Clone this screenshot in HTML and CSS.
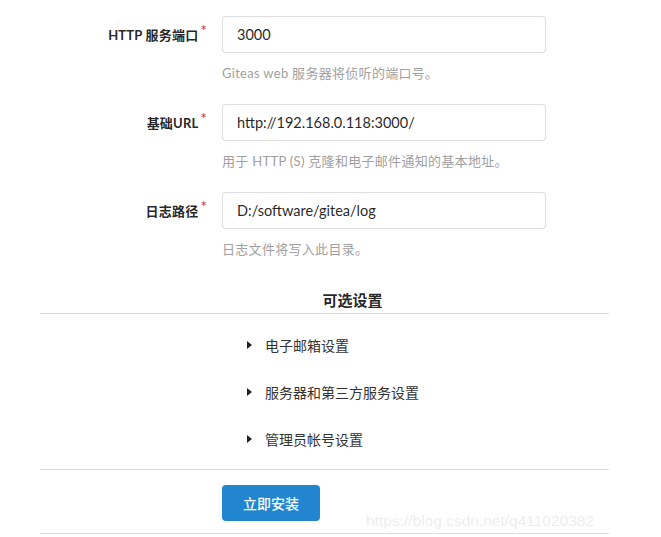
FILE: index.html
```html
<!DOCTYPE html>
<html lang="zh-CN">
<head>
  <meta charset="UTF-8" />
  <meta name="viewport" content="width=device-width, initial-scale=1.0"/>
  <title>安装</title>
  <link rel="stylesheet" href="styles.css">
</head>
<body>
  <div class="install-form">

    <!-- 基本设置 -->
    <div class="field">
      <label class="field-label required">HTTP 服务端口</label>
      <div class="field-body">
        <input type="text" value="3000" />
        <span class="help">Giteas web 服务器将侦听的端口号。</span>
      </div>
    </div>

    <div class="field">
      <label class="field-label required">基础URL</label>
      <div class="field-body">
        <input type="text" value="http://192.168.0.118:3000/" />
        <span class="help">用于 HTTP (S) 克隆和电子邮件通知的基本地址。</span>
      </div>
    </div>

    <div class="field">
      <label class="field-label required">日志路径</label>
      <div class="field-body">
        <input type="text" value="D:/software/gitea/log" />
        <span class="help">日志文件将写入此目录。</span>
      </div>
    </div>

    <!-- 可选设置 -->
    <h4 class="divider-header">可选设置</h4>
    <div class="optional">
      <div class="toggle"><i class="caret"></i>电子邮箱设置</div>
      <div class="toggle"><i class="caret"></i>服务器和第三方服务设置</div>
      <div class="toggle"><i class="caret"></i>管理员帐号设置</div>
    </div>

    <div class="actions">
      <button class="btn-primary">立即安装</button>
    </div>
  </div>

  <div class="watermark">https://blog.csdn.net/q411020382</div>
</body>
</html>
```

FILE: styles.css
```css
body {
  margin: 0;
  background-color: #fff;
  font-family: Lato, "Noto Sans CJK SC", sans-serif;
  color: rgba(0, 0, 0, 0.87);
}
.install-form {
  width: 569px;
  margin-left: 40px;
  padding-top: 16px;
}

/* Fields */
.field {
  display: flex;
  align-items: flex-start;
  margin-bottom: 21px;
}
.field-label {
  width: 167px;
  margin-right: 15px;
  text-align: right;
  font-size: 13px;
  font-weight: bold;
  line-height: 37px;
  letter-spacing: 0.2px;
}
.field-label.required::after {
  content: "*";
  color: #db2828;
  font-size: 15px;
  font-weight: normal;
  position: relative;
  top: -4px;
  margin-left: 2px;
}
.field-body {
  display: flex;
  flex-direction: column;
}
.field-body input {
  box-sizing: border-box;
  width: 324px;
  height: 37px;
  padding: 0 14px;
  border: 1px solid rgba(34, 36, 38, 0.15);
  border-radius: 4px;
  font-family: Lato, "Noto Sans CJK SC", sans-serif;
  font-size: 14.5px;
  color: rgba(0, 0, 0, 0.87);
  outline: none;
}
.help {
  margin-top: 10px;
  font-size: 13px;
  line-height: 20px;
  color: #a0a0a0;
  letter-spacing: 0.3px;
}

/* Optional settings */
.divider-header {
  margin: 31px 0 0;
  padding: 0 0 3px 56px;
  text-align: center;
  font-size: 15px;
  line-height: 20px;
  font-weight: bold;
  border-bottom: 1px solid #dcdcdc;
}
.optional {
  padding: 7px 0;
  border-bottom: 1px solid #dcdcdc;
}
.toggle {
  display: flex;
  align-items: center;
  height: 47px;
  padding-left: 207px;
  font-size: 14px;
  color: #333;
}
.caret {
  width: 0;
  height: 0;
  border-top: 4px solid transparent;
  border-bottom: 4px solid transparent;
  border-left: 5px solid #222;
  margin-right: 13px;
}

/* Button */
.actions {
  padding: 15px 0 12px 182px;
  border-bottom: 1px solid #dcdcdc;
}
.btn-primary {
  width: 98px;
  height: 36px;
  background-color: #2185d0;
  color: #fff;
  border: none;
  border-radius: 4px;
  font-family: Lato, "Noto Sans CJK SC", sans-serif;
  font-size: 14px;
  font-weight: 500;
  cursor: pointer;
}

.watermark {
  position: absolute;
  left: 366px;
  top: 512px;
  font-family: "Liberation Sans", sans-serif;
  font-size: 15.5px;
  color: rgba(200, 200, 200, 0.35);
}
```
